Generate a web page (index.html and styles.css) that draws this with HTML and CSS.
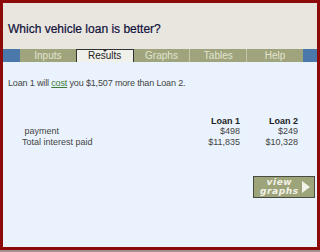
FILE: index.html
```html
<!DOCTYPE html>
<html lang="en">
<head>
  <meta charset="UTF-8" />
  <title>Which vehicle loan is better?</title>
  <link rel="stylesheet" href="styles.css">
</head>
<body>

<div class="frame">
  <!-- Title -->
  <div class="header">
    <h1 class="title">Which vehicle loan is better?</h1>
  </div>

  <!-- Tabs -->
  <div class="tabs">
    <div class="tab">Inputs</div>
    <div class="tab active">Results</div>
    <div class="tab">Graphs</div>
    <div class="tab">Tables</div>
    <div class="tab">Help</div>
  </div>

  <!-- Results -->
  <div class="content">
    <p class="summary">Loan 1 will <a href="#" class="term">cost</a> you $1,507 more than Loan 2.</p>

    <table class="results">
      <tr>
        <th></th>
        <th>Loan 1</th>
        <th>Loan 2</th>
      </tr>
      <tr>
        <td class="label">&nbsp;payment</td>
        <td>$498</td>
        <td>$249</td>
      </tr>
      <tr>
        <td class="label">Total interest paid</td>
        <td>$11,835</td>
        <td>$10,328</td>
      </tr>
    </table>

    <div class="actions">
      <button class="view-btn">
        <span class="view-text">view<br>graphs</span>
        <svg width="8" height="12" viewBox="0 0 8 12"><polygon points="0,0 8,6 0,12" fill="#f2f2e8"/></svg>
      </button>
    </div>
  </div>
</div>

</body>
</html>
```

FILE: styles.css
```css
* { margin: 0; padding: 0; box-sizing: border-box; }
body {
  font-family: "Liberation Sans", Arial, sans-serif;
  background: #a89090;
  width: 320px;
  height: 252px;
}

/* Frame */
.frame {
  width: 320px;
  height: 250px;
  border: 3px solid #8c0a0a;
  background: #eaf3fd;
  display: flex;
  flex-direction: column;
}

/* Header */
.header {
  height: 46px;
  background: #e8e6df;
  padding: 19px 0 0 5px;
}
.title {
  font-size: 12px;
  font-weight: normal;
  color: #10103a;
  line-height: 14px;
  -webkit-text-stroke: 0.2px #10103a;
}

/* Tabs */
.tabs {
  display: flex;
  height: 13px;
  background: #4b78ab;
  padding: 0 14px 0 17px;
}
.tab {
  flex: 1;
  background: #9fa47c;
  color: #e2e5d0;
  font-size: 10px;
  text-align: center;
  line-height: 13px;
  border-left: 1px solid #c4c7ad;
}
.tab:first-child { border-left: none; }
.tab.active {
  position: relative;
  background: #f1f1ec;
  color: #222;
  border: 1px solid #333;
  border-bottom: none;
  line-height: 12px;
}
.tab.active::before {
  content: "";
  position: absolute;
  top: -1px;
  left: 50%;
  margin-left: -3px;
  border: 3px solid transparent;
  border-top: 3px solid #333;
}
.tab.active + .tab { border-left: none; }

/* Content */
.content {
  flex: 1;
  padding: 16px 2px 0 5px;
  color: #444;
  font-size: 9px;
}
.summary {
  line-height: 11px;
  letter-spacing: -0.15px;
}
.term {
  color: #3a7a3a;
  text-decoration: underline;
}

.results {
  margin-top: 27px;
  width: 290px;
  border-collapse: collapse;
}
.results th {
  font-weight: bold;
  color: #222;
  text-align: right;
  font-size: 9px;
  line-height: 10px;
}
.results td {
  text-align: right;
  line-height: 11px;
}
.results td.label {
  text-align: left;
  padding-left: 14px;
}
.results th:nth-child(2), .results td:nth-child(2),
.results th:nth-child(3), .results td:nth-child(3) { width: 58px; }

.actions {
  display: flex;
  justify-content: flex-end;
  margin-top: 28px;
}
.view-btn {
  display: flex;
  align-items: center;
  gap: 3px;
  width: 62px;
  height: 22px;
  background: #9ea47a;
  border: 1px solid #4a4a40;
  padding: 0 3px 0 6px;
  font-family: "DejaVu Sans", Verdana, sans-serif;
}
.view-text {
  color: #f2f2e8;
  font-size: 9px;
  font-weight: bold;
  font-style: italic;
  line-height: 9px;
  text-align: center;
  letter-spacing: 0.6px;
}
```
